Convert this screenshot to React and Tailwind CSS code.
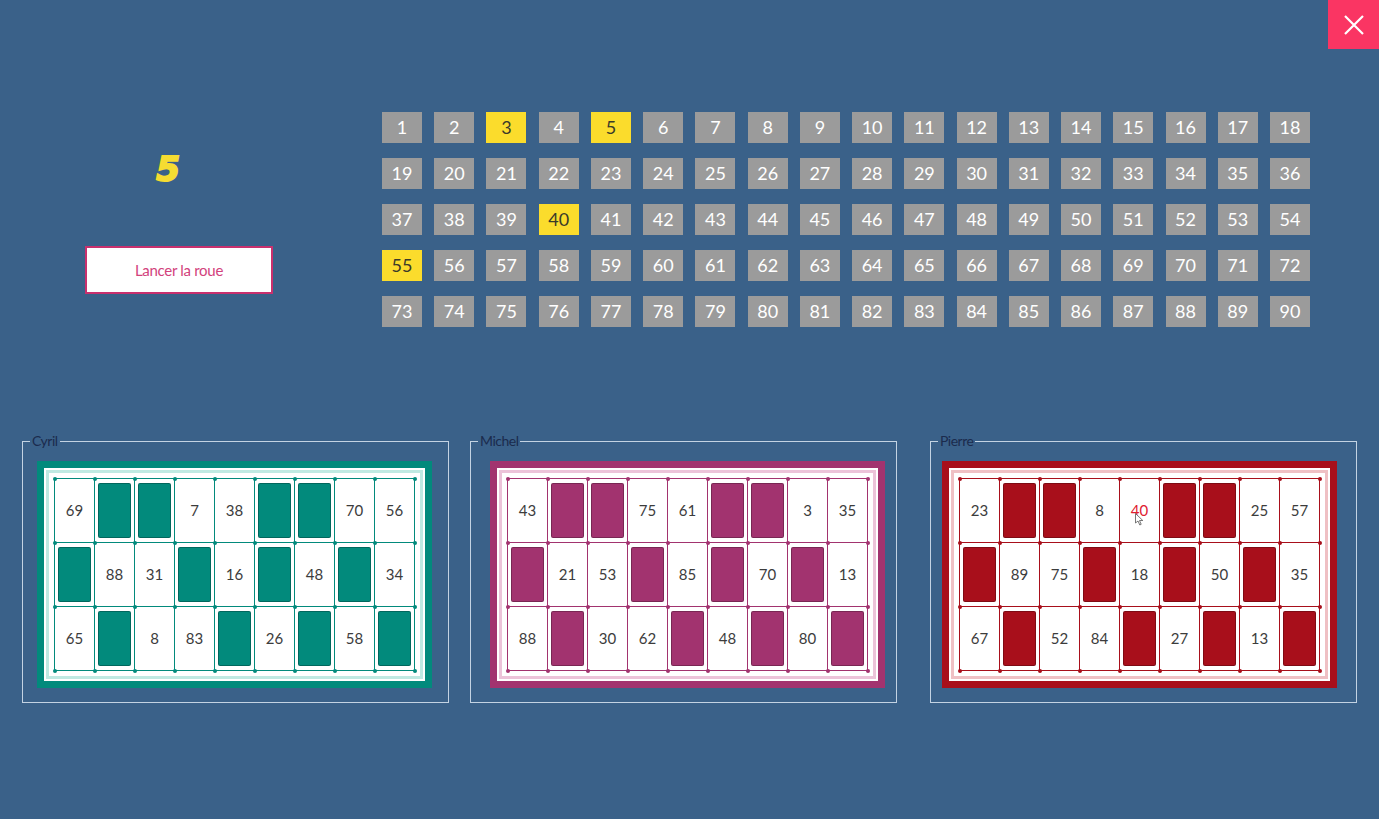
import React from "react";

const F = null;

const cards = [
  {
    name: "Cyril",
    color: "#028a7c",
    tint: "#bfe9e2",
    ml: "ml-[22px]",
    pl: "pl-[14px]",
    rows: [
      [69, F, F, 7, 38, F, F, 70, 56],
      [F, 88, 31, F, 16, F, 48, F, 34],
      [65, F, 8, 83, F, 26, F, 58, F],
    ],
  },
  {
    name: "Michel",
    color: "#a2336f",
    tint: "#ecc3d9",
    ml: "ml-[21px]",
    pl: "pl-[19px]",
    rows: [
      [43, F, F, 75, 61, F, F, 3, 35],
      [F, 21, 53, F, 85, F, 70, F, 13],
      [88, F, 30, 62, F, 48, F, 80, F],
    ],
  },
  {
    name: "Pierre",
    color: "#a80f1b",
    tint: "#efc0c4",
    ml: "ml-[33px]",
    pl: "pl-[11px]",
    rows: [
      [23, F, F, 8, 40, F, F, 25, 57],
      [F, 89, 75, F, 18, F, 50, F, 35],
      [67, F, 52, 84, F, 27, F, 13, F],
    ],
  },
];

const drawn = [3, 5, 40, 55];

function Card({ card }) {
  return (
    <fieldset
      className={`${card.ml} w-[427px] flex-none border border-[#c3d3e3] pt-[12px] pb-[14px]`}
    >
      <legend className="ml-[7px] px-[2px] text-[14px] leading-[16px] text-[#1b2b4d] tracking-[-0.5px]">
        {card.name}
      </legend>
      <div className={`${card.pl} flex`}>
        <div className="p-[7px]" style={{ backgroundColor: card.color }}>
          <div className="border-2 border-white">
            <div
              className="bg-white border-[3px] p-[5px]"
              style={{ borderColor: card.tint }}
            >
              <div
                className="relative grid grid-cols-[repeat(9,40px)] grid-rows-[repeat(3,64px)] border-l border-t"
                style={{ borderColor: card.color }}
              >
                {card.rows.flat().map((v, i) => (
                  <div
                    key={i}
                    className="relative border-r border-b flex items-center justify-center"
                    style={{ borderColor: card.color }}
                  >
                    {v === null ? (
                      <div
                        className="absolute left-[3px] right-[3px] top-[4px] bottom-[4px] rounded-[2px] border border-black/25"
                        style={{ backgroundColor: card.color }}
                      />
                    ) : (
                      <span
                        className={`text-[15px] ${
                          card.name === "Pierre" && v === 40
                            ? "text-[#e02030]"
                            : "text-[#3c3c3c]"
                        }`}
                      >
                        {v}
                      </span>
                    )}
                    {card.name === "Pierre" && v === 40 && (
                      <svg
                        className="absolute left-[15px] top-[34px]"
                        width="9"
                        height="13"
                        viewBox="0 0 9 13"
                      >
                        <path
                          d="M0.5 0.5 L0.5 10 L3 8 L4.8 12 L6.2 11.3 L4.5 7.5 L7.8 7.5 Z"
                          fill="#fff"
                          stroke="#555"
                          strokeWidth="0.8"
                        />
                      </svg>
                    )}
                  </div>
                ))}
                {Array.from({ length: 10 }).map((_, c) =>
                  Array.from({ length: 4 }).map((_, r) => (
                    <div
                      key={`d${c}-${r}`}
                      className="absolute w-[4px] h-[4px] rounded-full"
                      style={{
                        left: c * 40 - 2.5,
                        top: r * 64 - 2.5,
                        backgroundColor: card.color,
                      }}
                    />
                  ))
                )}
              </div>
            </div>
          </div>
        </div>
      </div>
    </fieldset>
  );
}

export default function App() {
  return (
    <div
      className="relative w-[1379px] h-[819px] overflow-hidden bg-[#3a6189]"
      style={{ fontFamily: "Lato, 'Liberation Sans', sans-serif" }}
    >
      <button className="absolute top-0 right-0 w-[51px] h-[49px] bg-[#fa3563] flex items-center justify-center">
        <svg width="22" height="22" viewBox="0 0 22 22">
          <path
            d="M2 2 L20 20 M20 2 L2 20"
            stroke="#fff"
            strokeWidth="2.2"
            fill="none"
          />
        </svg>
      </button>

      <div className="flex pt-[112px]">
        <div className="w-[382px] flex-none flex flex-col">
          <div
            className="w-[336px] mt-[40px] h-[34px] text-center text-[34px] leading-[34px] font-black italic text-[#f5dc32] [-webkit-text-stroke:2px_#f5dc32]"
            style={{ fontFamily: "'DejaVu Sans', sans-serif" }}
          >
            5
          </div>
          <button className="ml-[85px] mt-[60px] w-[188px] h-[48px] bg-white border-2 border-[#c9306e] text-[#d2427c] text-[15px] tracking-[-0.3px]">
            Lancer la roue
          </button>
        </div>
        <div className="grid grid-cols-[repeat(18,40px)] gap-x-[12.24px] gap-y-[15px]">
          {Array.from({ length: 90 }).map((_, i) => {
            const n = i + 1;
            const on = drawn.includes(n);
            return (
              <div
                key={n}
                className={`h-[31px] flex items-center justify-center text-[18px] ${
                  on ? "bg-[#fbdc2c] text-[#3a3a2a]" : "bg-[#9b9b9b] text-white"
                }`}
              >
                {n}
              </div>
            );
          })}
        </div>
      </div>

      <div className="flex mt-[106px]">
        {cards.map((c) => (
          <Card key={c.name} card={c} />
        ))}
      </div>
    </div>
  );
}
